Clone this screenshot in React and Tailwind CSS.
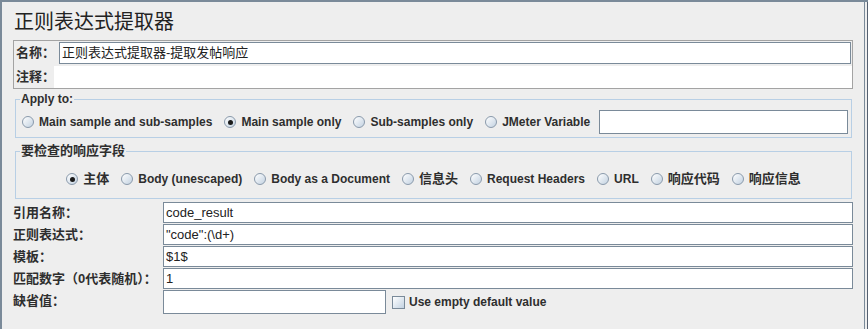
import React from 'react';

const font = "font-['Liberation_Sans','Noto_Sans_CJK_SC',sans-serif]";

function Radio({ checked }) {
  return (
    <span className="w-[12px] h-[12px] rounded-full border border-[#8a9aab] bg-linear-to-br from-white to-[#c3d2e1] flex items-center justify-center shrink-0">
      {checked && <span className="w-[5px] h-[5px] rounded-full bg-[#1a1a1a]" />}
    </span>
  );
}

function Choice({ label, checked, cjk }) {
  return (
    <label className="flex items-center gap-[5px] whitespace-nowrap">
      <Radio checked={checked} />
      <span className={cjk ? 'text-[13px]' : 'text-[12px]'}>{label}</span>
    </label>
  );
}

function Field({ value, className = '' }) {
  return (
    <div className={`bg-white border border-[#7a8a99] flex items-center pl-[2px] text-[13px] font-normal text-[#222] whitespace-nowrap ${className}`}>
      {value}
    </div>
  );
}

const rows = [
  { label: '引用名称：', value: 'code_result' },
  { label: '正则表达式：', value: '"code":(\\d+)' },
  { label: '模板：', value: '$1$' },
  { label: '匹配数字（0代表随机）：', value: '1' },
];

export default function App() {
  return (
    <div className={`w-[868px] h-[329px] bg-[#eeeeee] border-t-2 border-l-2 border-[#7a8a99] flex text-[#2e2e2e] font-bold ${font}`}>
      <div className="flex-1 px-[11px] pt-[8px]">
        <h1 className="text-[20px] leading-[24px] font-normal pl-[1px] text-[#222]">正则表达式提取器</h1>

        {/* name / comment */}
        <div className="mt-[6px] border border-[#a3a3a3] pl-[1px] pt-[1px]">
          <div className="flex items-center h-[22px]">
            <span className="w-[44px] shrink-0 pl-[1px] text-[13px] whitespace-nowrap">名称：</span>
            <Field value="正则表达式提取器-提取发帖响应" className="flex-1 h-[22px] mr-[1px]" />
          </div>
          <div className="flex items-center h-[23px] mt-[1px]">
            <span className="w-[39px] shrink-0 pl-[1px] text-[13px] whitespace-nowrap">注释：</span>
            <div className="flex-1 h-[22px] bg-white" />
          </div>
        </div>

        {/* apply to */}
        <fieldset className="mt-[3px] ml-[2px] mr-[1px] border border-[#b8cfe5] pl-[6px] pr-[3px] pb-[3px]">
          <legend className="ml-[-2px] px-[1px] text-[12px] leading-[14px]">Apply to:</legend>
          <div className="flex items-center gap-[12px] pt-[4px]">
            <Choice label="Main sample and sub-samples" />
            <Choice label="Main sample only" checked />
            <Choice label="Sub-samples only" />
            <Choice label="JMeter Variable" />
            <Field value="" className="flex-1 h-[24px] ml-[-3px]" />
          </div>
        </fieldset>

        {/* response field */}
        <fieldset className="mt-[6px] ml-[2px] mr-[1px] border border-[#b8cfe5] pb-[9px]">
          <legend className="ml-[4px] px-[1px] text-[13px] leading-[14px]">要检查的响应字段</legend>
          <div className="flex items-center justify-center gap-[12px] h-[20px] mt-[11px]">
            <Choice label="主体" checked cjk />
            <Choice label="Body (unescaped)" />
            <Choice label="Body as a Document" />
            <Choice label="信息头" cjk />
            <Choice label="Request Headers" />
            <Choice label="URL" />
            <Choice label="响应代码" cjk />
            <Choice label="响应信息" cjk />
          </div>
        </fieldset>

        {/* extractor fields */}
        <div className="mt-[3px] flex flex-col gap-[1px]">
          {rows.map((r) => (
            <div key={r.label} className="flex items-center h-[21px]">
              <span className="w-[150px] shrink-0 text-[13px] whitespace-nowrap">{r.label}</span>
              <Field value={r.value} className="flex-1 h-[21px]" />
            </div>
          ))}
          <div className="flex items-center h-[24px]">
            <span className="w-[150px] shrink-0 text-[13px] self-start leading-[21px]">缺省值：</span>
            <Field value="" className="w-[223px] h-[24px]" />
            <span className="ml-[6px] w-[13px] h-[13px] border border-[#7a8a99] bg-linear-to-br from-white to-[#c3d2e1]" />
            <span className="ml-[4px] text-[12px]">Use empty default value</span>
          </div>
        </div>
      </div>
      <div className="w-[1px] bg-[#7a8a99]" />
      <div className="w-[2px]" />
      <div className="w-[1px] bg-[#556070]" />
    </div>
  );
}
